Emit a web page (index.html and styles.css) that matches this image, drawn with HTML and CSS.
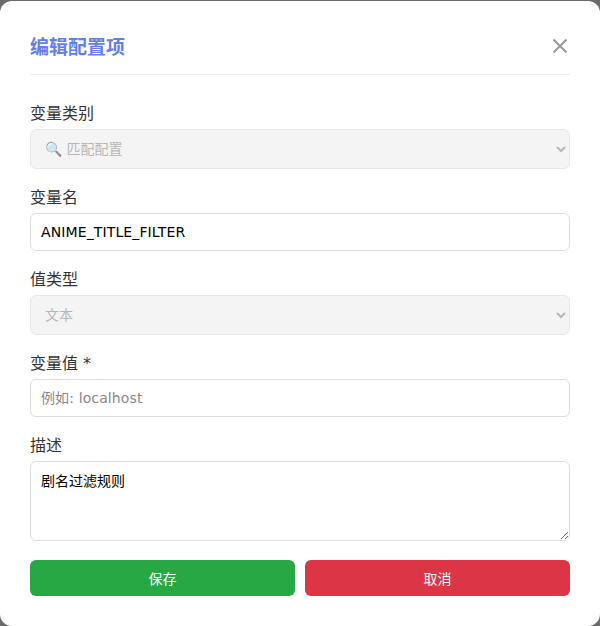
FILE: index.html
```html
<!DOCTYPE html>
<html lang="zh-CN">
<head>
<meta charset="utf-8">
<title>编辑配置项</title>
<link rel="stylesheet" href="styles.css">
</head>
<body>
<div class="modal">
  <div class="modal-header">
    <h3 class="modal-title">编辑配置项</h3>
    <button class="close" type="button" aria-label="关闭">
      <svg class="close-icon" viewBox="0 0 16 16" width="16" height="16"><path d="M1.5 1.5 14.5 14.5M14.5 1.5 1.5 14.5"/></svg>
    </button>
  </div>
  <form class="form">
    <div class="group">
      <label class="label">变量类别</label>
      <select class="control select" disabled><option>🔍 匹配配置</option></select>
    </div>
    <div class="group">
      <label class="label">变量名</label>
      <input class="control input" value="ANIME_TITLE_FILTER">
    </div>
    <div class="group">
      <label class="label">值类型</label>
      <select class="control select" disabled><option>文本</option></select>
    </div>
    <div class="group">
      <label class="label">变量值 *</label>
      <input class="control input" placeholder="例如: localhost">
    </div>
    <div class="group">
      <label class="label">描述</label>
      <textarea class="control textarea">剧名过滤规则</textarea>
    </div>
    <div class="actions">
      <button class="btn save" type="button">保存</button>
      <button class="btn cancel" type="button">取消</button>
    </div>
  </form>
</div>
</body>
</html>
```
FILE: styles.css
```css
* { box-sizing: border-box; }
html, body { margin: 0; height: 100%; }
body {
  background: #6b6b6b;
  padding-top: 1px;
  overflow: hidden;
  font-family: "DejaVu Sans", "Noto Sans CJK SC", sans-serif;
}
.modal {
  width: 600px;
  height: 625px;
  background: #fff;
  border-radius: 12px;
  padding: 30px;
}
.modal-header {
  display: flex;
  justify-content: space-between;
  align-items: center;
  height: 44px;
  padding-bottom: 14px;
  border-bottom: 1px solid #eee;
  margin-bottom: 29px;
}
.modal-title {
  margin: 0;
  font-size: 19px;
  font-weight: 700;
  color: #667eea;
}
.close {
  display: flex;
  align-items: center;
  justify-content: center;
  border: 0;
  background: none;
  padding: 0;
  width: 20px;
  height: 30px;
}
.close-icon { fill: none; stroke: #999; stroke-width: 2; }
.group { margin-bottom: 19px; }
.label {
  display: block;
  font-size: 16px;
  line-height: 20px;
  margin-bottom: 5px;
  color: #333;
}
.control {
  display: block;
  width: 100%;
  border: 1px solid #ddd;
  border-radius: 6px;
  font-family: inherit;
  font-size: 14px;
  color: #000;
  background: #fff;
  padding: 10px;
}
.select {
  height: 40px;
  background: #f0f0f0;
  color: #999;
}
.input { height: 38px; letter-spacing: 0.12px; }
.input::placeholder { color: #888; }
.textarea { height: 80px; padding-top: 8px; resize: vertical; }
.actions { display: flex; gap: 10px; margin-top: 19px; }
.btn {
  flex: 1;
  height: 36px;
  border: 0;
  border-radius: 6px;
  color: #fff;
  font-family: inherit;
  font-size: 14px;
}
.save { background: #28a745; }
.cancel { background: #dc3545; }
```
